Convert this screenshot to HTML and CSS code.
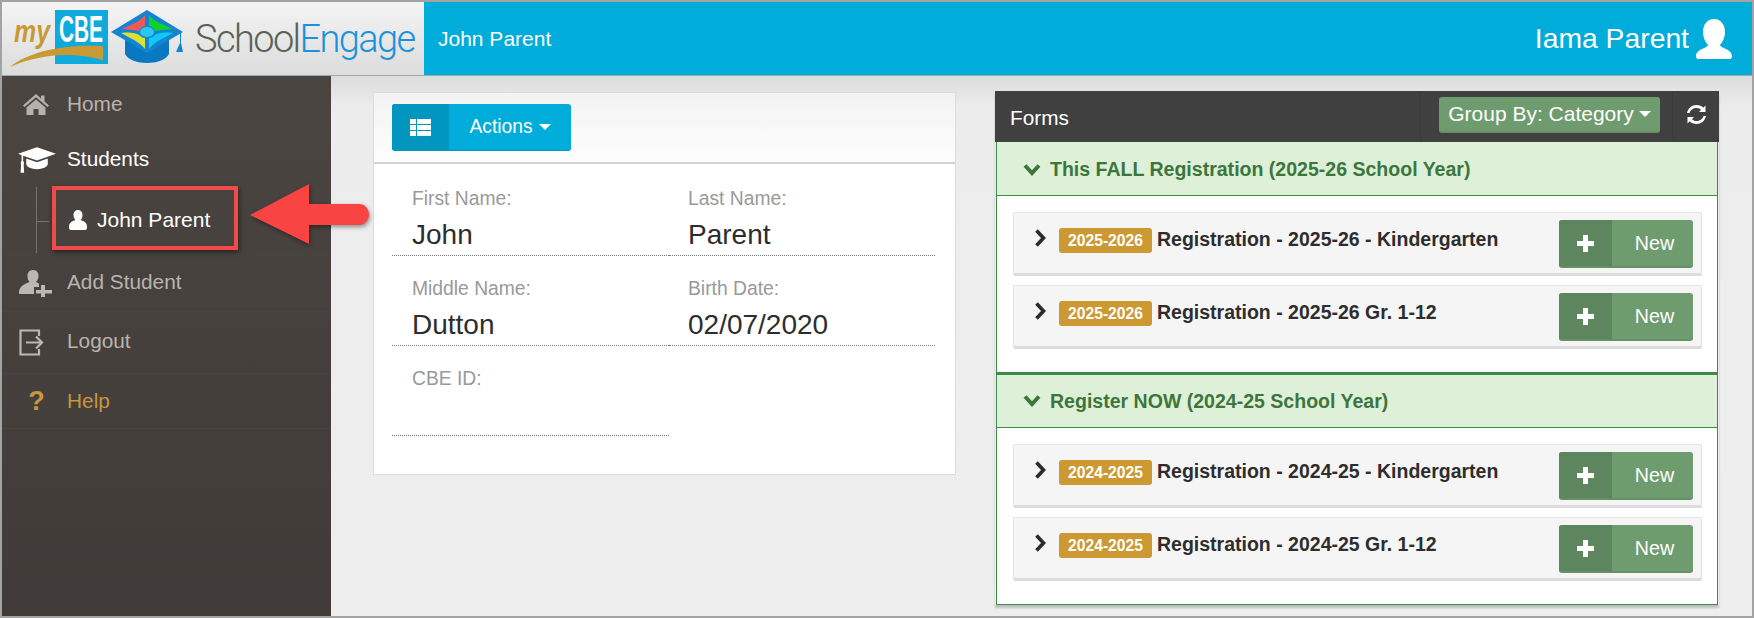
FILE: index.html
```html
<!DOCTYPE html>
<html lang="en">
<head>
<meta charset="utf-8">
<title>SchoolEngage</title>
<link rel="stylesheet" href="styles.css">
</head>
<body>
<div class="frame">
  <header class="topbar">
    <div class="logo">
      <svg class="logo-art" width="190" height="73" viewBox="0 2 190 73">
        <rect x="55" y="10" width="53" height="54" fill="#10a9dc"/>
        <text x="59" y="42" class="logo-cbe" textLength="44" lengthAdjust="spacingAndGlyphs">CBE</text>
        <text x="14" y="42" class="logo-my" textLength="36" lengthAdjust="spacingAndGlyphs">my</text>
        <path d="M10 67C28 52 62 44 103 46L103 60C70 51 38 55 10 67Z" fill="#c99a33"/>
        <path d="M125 40V54C131 66 163 66 169 54V40Z" fill="#0a78c0"/>
        <path d="M147 10L183 32L147 53L111 32Z" fill="#1384d2"/>
        <path d="M145 15C141 21 132 24 122 29C129 30 136 30 139 31C141 27 143 26 145 26Z" fill="#f2575a"/>
        <path d="M149 15C153 21 162 24 173 29C166 30 158 30 155 31C153 27 151 26 149 26Z" fill="#12d12a"/>
        <path d="M121 33C130 32 136 33 139 35C141 37 143 38 145 38V49C140 42 130 38 121 33Z" fill="#dce232"/>
        <path d="M173 33C164 32 158 33 155 35C153 37 151 38 149 38V49C154 42 164 38 173 33Z" fill="#12c8f5"/>
        <ellipse cx="147" cy="32" rx="7" ry="5" fill="#2cc6f0"/>
        <path d="M180 33V43L176 52H183L181 43V33Z" fill="#1384d2"/>
      </svg>
      <span class="brand"><span class="brand-a">School</span><span class="brand-b">Engage</span></span>
    </div>
    <div class="top-student">John Parent</div>
    <div class="top-user">
      <span>Iama Parent</span>
      <svg width="36" height="40" viewBox="0 0 36 40"><path d="M18 0C25 0 29 6 29 13C29 19 26 24 24 26C24 29 36 30 36 37C36 39 35 40 34 40H2C1 40 0 39 0 37C0 30 12 29 12 26C10 24 7 19 7 13C7 6 11 0 18 0Z" fill="#fff"/></svg>
    </div>
  </header>
  <div class="workspace">
    <nav class="sidebar">
      <a class="nav-item nav-home">
        <svg class="nav-icon" width="26" height="21" viewBox="0 0 26 21"><path d="M13 0L18 4.500V1.500H21.500V7.500L26 11.500L24.500 13L13 3.200L1.500 13L0 11.500ZM13 5.500L22.500 13.500V21H15.500V15H10.500V21H3.500V13.500Z" fill="#b5b0ab"/></svg>
        <span>Home</span>
      </a>
      <div class="nav-group">
        <a class="nav-item nav-head">
          <svg class="nav-icon nav-icon-cap" width="38" height="26" viewBox="0 0 37 25"><path d="M18.500 0L37 6.500L18.500 13L5 8.300V13.500C6 14.500 6 16 5.500 17L6 25H2.500L3 17C2.500 16 2.500 14.500 3.500 13.500V7.800L0 6.500ZM8 11L18.500 14.700L29 11V16.500C29 19.500 23.500 21.500 18.500 21.500C13.500 21.500 8 19.500 8 16.500Z" fill="#fff"/></svg>
          <span>Students</span>
        </a>
        <div class="nav-sub">
          <span class="tree-branch"></span>
          <a class="nav-child">
            <svg width="18" height="20" viewBox="0 0 18 20"><path d="M9 0C12 0 13.500 2.500 13.500 5C13.500 7.500 12.500 9 11.500 10C14 11 18 12 18 16.500V18C18 19 17 20 16 20H2C1 20 0 19 0 18V16.500C0 12 4 11 6.500 10C5.500 9 4.500 7.500 4.500 5C4.500 2.500 6 0 9 0Z" fill="#fff"/></svg>
            <span>John Parent</span>
          </a>
        </div>
      </div>
      <a class="nav-item nav-add">
        <svg class="nav-icon nav-icon-wide" width="33" height="27" viewBox="0 0 33 27"><path d="M14 0C18 0 19.500 3 19.500 6C19.500 9 18 11 17 12C18 12.500 19 13 20 13.500V17H15V24H1.500C.5 24 0 23.500 0 22.500C0 16 6 14 10.500 12C9.500 11 8.500 9 8.500 6C8.500 3 10 0 14 0ZM22 15H26V20H33V23.500H26V27H22V23.500H17V20H22Z" fill="#bcb7b2"/></svg>
        <span>Add Student</span>
      </a>
      <a class="nav-item nav-logout">
        <svg class="nav-icon nav-icon-wide" width="25" height="27" viewBox="0 0 25 27"><path d="M20 7V1.500H1.500V25.500H20V20M7 13.500H22M17 7.500L23 13.500L17 19.500" fill="none" stroke="#bcb7b2" stroke-width="2.200"/></svg>
        <span>Logout</span>
      </a>
      <a class="nav-item nav-help">
        <span class="help-mark">?</span>
        <span>Help</span>
      </a>
    </nav>
    <main class="content">
      <section class="profile">
        <div class="profile-head">
          <button class="split-btn btn-blue">
            <span class="btn-seg">
              <svg width="21" height="17" viewBox="0 0 21 17"><path d="M0 0H6V5H0ZM7 0H21V5H7ZM0 6H6V11H0ZM7 6H21V11H7ZM0 12H6V17H0ZM7 12H21V17H7Z" fill="#fff"/></svg>
            </span>
            <span class="btn-label">Actions<i class="caret"></i></span>
          </button>
        </div>
        <div class="fields">
          <div class="field"><div class="field-label">First Name:</div><div class="field-value">John</div></div>
          <div class="field"><div class="field-label">Last Name:</div><div class="field-value">Parent</div></div>
          <div class="field"><div class="field-label">Middle Name:</div><div class="field-value">Dutton</div></div>
          <div class="field"><div class="field-label">Birth Date:</div><div class="field-value">02/07/2020</div></div>
          <div class="field"><div class="field-label">CBE ID:</div><div class="field-value"></div></div>
        </div>
      </section>
      <section class="forms">
        <div class="forms-head">
          <span class="forms-title">Forms</span>
          <div class="forms-tools">
            <button class="group-btn">Group By: Category<i class="caret"></i></button>
          </div>
          <div class="forms-refresh">
            <svg width="19" height="19" viewBox="0 0 19 19"><path d="M2.500 8C3.500 4.500 6.500 3 9.500 3C11.500 3 13 3.800 14 4.800L12 7H18.500V.5L16.300 2.700C14.700 1 12.300 0 9.500 0C5 0 1 3 0 8ZM16.500 11C15.500 14.500 12.500 16 9.500 16C7.500 16 6 15.200 5 14.200L7 12H.5V18.500L2.700 16.300C4.300 18 6.700 19 9.500 19C14 19 18 16 19 11Z" fill="#fff"/></svg>
          </div>
        </div>
        <div class="group">
          <h3 class="group-head"><svg width="18" height="14" viewBox="0 0 18 14"><path d="M2 2.500L9 10L16 2.500" fill="none" stroke="#3c763d" stroke-width="4"/></svg>This FALL Registration (2025-26 School Year)</h3>
          <div class="group-body">
            <div class="card">
              <svg class="chev" width="13" height="18" viewBox="0 0 13 18"><path d="M2.500 1.500L9.500 9L2.500 16.500" fill="none" stroke="#2b2b2b" stroke-width="3.600"/></svg>
              <span class="badge">2025-2026</span>
              <span class="card-title">Registration - 2025-26 - Kindergarten</span>
              <button class="split-btn btn-green"><span class="btn-seg"><svg width="17" height="17" viewBox="0 0 17 17"><path d="M6 0H11V6H17V11H11V17H6V11H0V6H6Z" fill="#fff"/></svg></span><span class="btn-label">New</span></button>
            </div>
            <div class="card">
              <svg class="chev" width="13" height="18" viewBox="0 0 13 18"><path d="M2.500 1.500L9.500 9L2.500 16.500" fill="none" stroke="#2b2b2b" stroke-width="3.600"/></svg>
              <span class="badge">2025-2026</span>
              <span class="card-title">Registration - 2025-26 Gr. 1-12</span>
              <button class="split-btn btn-green"><span class="btn-seg"><svg width="17" height="17" viewBox="0 0 17 17"><path d="M6 0H11V6H17V11H11V17H6V11H0V6H6Z" fill="#fff"/></svg></span><span class="btn-label">New</span></button>
            </div>
          </div>
        </div>
        <div class="group">
          <h3 class="group-head"><svg width="18" height="14" viewBox="0 0 18 14"><path d="M2 2.500L9 10L16 2.500" fill="none" stroke="#3c763d" stroke-width="4"/></svg>Register NOW (2024-25 School Year)</h3>
          <div class="group-body">
            <div class="card">
              <svg class="chev" width="13" height="18" viewBox="0 0 13 18"><path d="M2.500 1.500L9.500 9L2.500 16.500" fill="none" stroke="#2b2b2b" stroke-width="3.600"/></svg>
              <span class="badge">2024-2025</span>
              <span class="card-title">Registration - 2024-25 - Kindergarten</span>
              <button class="split-btn btn-green"><span class="btn-seg"><svg width="17" height="17" viewBox="0 0 17 17"><path d="M6 0H11V6H17V11H11V17H6V11H0V6H6Z" fill="#fff"/></svg></span><span class="btn-label">New</span></button>
            </div>
            <div class="card">
              <svg class="chev" width="13" height="18" viewBox="0 0 13 18"><path d="M2.500 1.500L9.500 9L2.500 16.500" fill="none" stroke="#2b2b2b" stroke-width="3.600"/></svg>
              <span class="badge">2024-2025</span>
              <span class="card-title">Registration - 2024-25 Gr. 1-12</span>
              <button class="split-btn btn-green"><span class="btn-seg"><svg width="17" height="17" viewBox="0 0 17 17"><path d="M6 0H11V6H17V11H11V17H6V11H0V6H6Z" fill="#fff"/></svg></span><span class="btn-label">New</span></button>
            </div>
          </div>
        </div>
      </section>
    </main>
    <div class="callout-box"></div>
    <svg class="callout-arrow" width="130" height="70" viewBox="0 0 130 70"><path d="M5 31L64 0V20H114C120 20 124 25 124 30.500C124 36 120 41 114 41H64V60Z" fill="#f94444"/></svg>
  </div>
</div>
</body>
</html>
```
FILE: styles.css
```css
* { box-sizing: border-box; }
html, body { margin: 0; padding: 0; }
body {
  font-family: "Liberation Sans", Arial, sans-serif;
  color: #333;
  overflow: hidden;
}
.frame {
  width: 1754px;
  height: 618px;
  border: 2px solid #a3a3a3;
  background: #eeeeee;
  display: flex;
  flex-direction: column;
  overflow: hidden;
}

/* Top bar */
.topbar {
  height: 74px;
  flex: none;
  display: flex;
  align-items: center;
  background: #00acda;
  color: #fff;
  border-bottom: 1px solid #9aa;
}
.logo {
  width: 422px;
  height: 100%;
  flex: none;
  display: flex;
  align-items: center;
  position: relative;
  background: linear-gradient(#f4f4f4, #dcdcdc);
}
.logo-art { flex: none; margin-left: -2px; }
.logo-cbe { font: bold 36px "Liberation Sans", sans-serif; fill: #fff; }
.logo-my { font: italic bold 31px "Liberation Sans", sans-serif; fill: #c99a33; }
.brand {
  font-family: Roboto, sans-serif;
  font-weight: 300;
  font-size: 38px;
  letter-spacing: -1.6px;
  margin-left: 5px;
  white-space: nowrap;
}
.brand-a { color: #5a6256; }
.brand-b { color: #1a92dc; }
.top-student { font-size: 21px; margin-left: 14px; }
.top-user {
  margin-left: auto;
  margin-right: 20px;
  display: flex;
  align-items: center;
  gap: 7px;
  font-size: 28.300px;
}

/* Workspace */
.workspace {
  flex: 1;
  display: flex;
  position: relative;
  min-height: 0;
  background: linear-gradient(#dcdcdc, #ececec 30px, #eeeeee);
}

/* Sidebar */
.sidebar {
  width: 329px;
  flex: none;
  background: linear-gradient(#4a4541, #403b38);
  color: #b9b4af;
  font-size: 20.800px;
}
.nav-item {
  display: flex;
  align-items: center;
  height: 57px;
  padding-left: 21px;
  border-bottom: 1px solid #45463f;
}
.nav-icon { flex: none; width: 26px; }
.nav-icon-wide { width: auto; margin-left: -4px; }
.nav-icon-cap { width: auto; margin-left: -5px; }
.nav-home > span:last-child { margin-left: 18px; }
.nav-head { color: #fff; height: 54px; border-bottom: 0; }
.nav-head > span:last-child { margin: 0 0 2px 11px; }
.nav-group { height: 122px; border-bottom: 1px solid #45463f; }
.nav-add > span:last-child { margin: 0 0 2px 15px; }
.nav-logout { height: 62px; }
.nav-logout > span:last-child { margin: 0 0 4px 23px; }
.nav-help { color: #c8963e; height: 55px; }
.nav-help > span:last-child { margin-left: 18.600px; }
.help-mark { font-weight: bold; font-size: 27px; width: 24px; margin-left: 1.500px; text-align: center; }
.nav-sub {
  height: 66px;
  margin-left: 34px;
  border-left: 1px solid #77726d;
  position: relative;
  display: flex;
  align-items: center;
  padding-left: 32px;
}
.tree-branch {
  position: absolute;
  left: 0;
  top: 34px;
  width: 12px;
  border-top: 1px solid #77726d;
}
.nav-child {
  display: flex;
  align-items: center;
  gap: 10px;
  font-size: 21px;
  color: #fff;
}

/* Callouts */
.callout-box {
  position: absolute;
  left: 49.500px;
  top: 110px;
  width: 186px;
  height: 64px;
  border: 4px solid #f24a4a;
  box-shadow: 1px 2px 5px rgba(0, 0, 0, .5);
}
.callout-arrow {
  position: absolute;
  left: 243px;
  top: 108px;
  filter: drop-shadow(1px 2px 2px rgba(0, 0, 0, .4));
  overflow: visible;
}

/* Content */
.content {
  flex: 1;
  display: flex;
  align-items: flex-start;
  padding: 15px 0 0 42px;
}
.profile {
  width: 583px;
  height: 383px;
  flex: none;
  margin-top: 1px;
  background: #fff;
  border: 1px solid #dcdcdc;
}
.profile-head {
  height: 71px;
  padding: 11px 0 0 18px;
  background: linear-gradient(#f3f3f3, #fdfdfd);
  border-bottom: 2px solid #d2d2d2;
}
.split-btn {
  display: flex;
  padding: 0;
  border: 0;
  color: #fff;
  font-family: inherit;
  overflow: hidden;
  border-radius: 3px;
}
.btn-seg {
  display: flex;
  align-items: center;
  justify-content: center;
}
.btn-label {
  display: flex;
  align-items: center;
  justify-content: center;
}
.btn-blue {
  width: 179px;
  height: 47px;
  background: #00acda;
  border-bottom: 1px solid #0099c4;
  font-size: 19.300px;
}
.btn-blue .btn-seg { width: 57px; background: #0096bf; }
.btn-blue .btn-label { flex: 1; }
.btn-blue .caret { margin-left: 6px; }
.caret {
  display: inline-block;
  width: 0;
  height: 0;
  margin-left: 5px;
  border-top: 6px solid #fff;
  border-left: 6px solid transparent;
  border-right: 6px solid transparent;
}
.fields {
  display: grid;
  grid-template-columns: 277px 266px;
  padding: 2px 0 0 18px;
}
.field {
  height: 90px;
  padding: 21px 0 0 20px;
  border-bottom: 1px dotted #777;
}
.field:nth-child(even) { padding-left: 19px; }
.field-label {
  font-size: 19.300px;
  line-height: 24px;
  color: #999;
}
.field-value {
  font-size: 28px;
  line-height: 34px;
  margin-top: 7px;
  color: #2d2d2d;
}

/* Forms */
.forms {
  width: 724px;
  margin-left: 39px;
  flex: none;
  box-shadow: 0 3px 2px rgba(0, 0, 0, .2);
}
.forms-head {
  height: 51px;
  display: flex;
  align-items: center;
  background: #404040;
  color: #fff;
}
.forms-title { font-size: 20.800px; margin-left: 15px; flex: 1; padding-top: 2px; }
.forms-tools {
  height: 100%;
  padding: 6px 12px 0 18px;
  border-left: 1px solid #3a3a3a;
  border-right: 1px solid #3a3a3a;
}
.group-btn {
  width: 221px;
  height: 36px;
  display: flex;
  align-items: center;
  justify-content: center;
  padding: 0;
  border: 0;
  border-bottom: 2px solid #679067;
  border-radius: 3px;
  background: #6f9c6f;
  color: #fff;
  font: 21px "Liberation Sans", sans-serif;
  white-space: nowrap;
}
.group-btn .caret { margin-left: 5px; }
.forms-refresh {
  width: 46px;
  display: flex;
  justify-content: center;
  padding: 0 0 4px 0;
}
.group {
  margin: 0 1px;
  background: #fff;
  border: 1px solid #3f8a46;
  border-top: 0;
}
.group + .group { border-top: 2px solid #3f8a46; }
.group-head {
  margin: 0;
  height: 54px;
  display: flex;
  align-items: center;
  gap: 9px;
  padding: 2px 0 0 26px;
  background: #dff0d8;
  border-bottom: 1px solid #3f8a46;
  color: #3c763d;
  font-size: 19.550px;
  font-weight: bold;
}
.group + .group .group-head { height: 53px; padding-top: 0; }
.group-body { padding: 16px 15px 23px 16px; }
.card {
  height: 64px;
  display: flex;
  align-items: flex-start;
  padding: 7px 8px 0 20px;
  background: #f5f5f5;
  border: 1px solid #e4e4e4;
  border-bottom: 3px solid #dcdcdc;
  border-radius: 2px;
  color: #2d2d2d;
}
.card + .card { margin-top: 9px; }
.chev { margin-top: 9px; flex: none; }
.badge {
  width: 93px;
  height: 25px;
  margin: 8px 0 0 12px;
  display: flex;
  align-items: center;
  justify-content: center;
  flex: none;
  border-radius: 3px;
  background: #cc9933;
  color: #fff;
  font-size: 15.700px;
  font-weight: bold;
}
.card-title {
  margin: 7px 0 0 5px;
  font-size: 19.500px;
  font-weight: bold;
  line-height: 24px;
  flex: 1;
}
.btn-green {
  width: 134px;
  height: 48px;
  flex: none;
  background: #6f9c6f;
  border-bottom: 2px solid #679067;
  font-size: 19.700px;
}
.btn-green .btn-seg { width: 53px; background: #5e865e; }
.btn-green .btn-label { flex: 1; padding-left: 4px; }
```
